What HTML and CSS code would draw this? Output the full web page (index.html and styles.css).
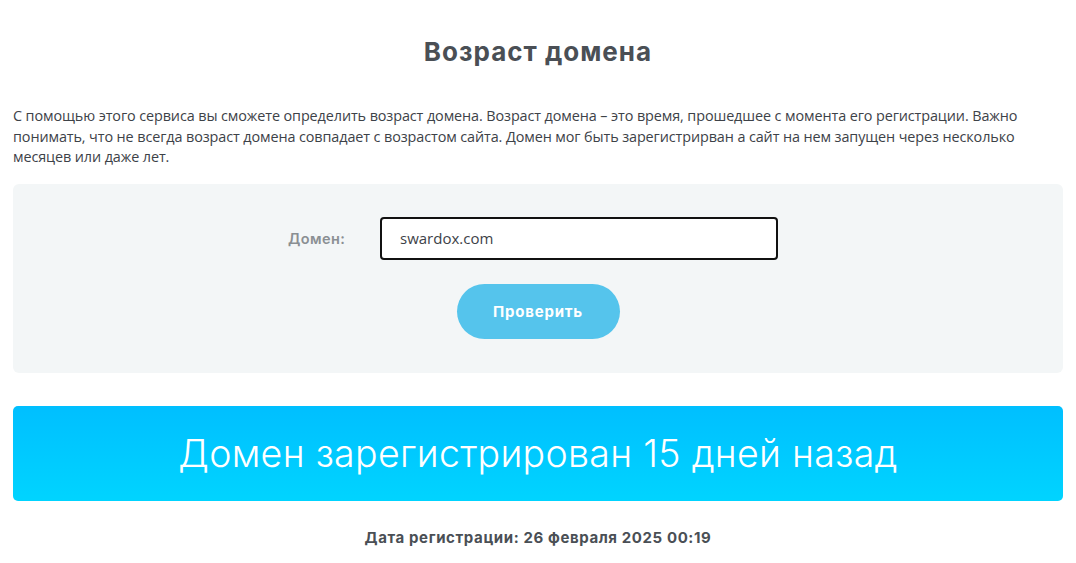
FILE: index.html
```html
<!DOCTYPE html>
<html lang="ru">
<head>
<meta charset="utf-8">
<link rel="stylesheet" href="styles.css">
</head>
<body>
<div class="page">
  <h1 class="title">Возраст домена</h1>
  <p class="intro">С помощью этого сервиса вы сможете определить возраст домена. Возраст домена – это время, прошедшее с момента его регистрации. Важно понимать, что не всегда возраст домена совпадает с возрастом сайта. Домен мог быть зарегистрирван а сайт на нем запущен через несколько месяцев или даже лет.</p>
  <form class="panel">
    <div class="row">
      <label class="label">Домен:</label>
      <div class="input">swardox.com</div>
    </div>
    <button type="button" class="btn">Проверить</button>
  </form>
  <div class="result">Домен зарегистрирован 15 дней назад</div>
  <div class="date">Дата регистрации: 26 февраля 2025 00:19</div>
</div>
</body>
</html>
```
FILE: styles.css
```css
* { box-sizing: border-box; }
html, body { margin: 0; padding: 0; background: #fff; }
body { font-family: "Open Sans", "Noto Sans", sans-serif; color: #4a4f55; }
.page { padding: 0 13px; }
.title {
  margin: 0;
  padding-top: 36px;
  height: 106px;
  text-align: center;
  font-family: "Inter", "Open Sans", sans-serif;
  font-weight: 700;
  font-size: 26px;
  letter-spacing: 1px;
  color: #4a4f55;
  line-height: 32px;
}
.intro {
  margin: 0;
  font-size: 14.4px;
  line-height: 20.5px;
  color: #3d4248;
  letter-spacing: -0.1px;
}
.panel {
  margin-top: 16px;
  height: 189px;
  background: #f3f6f7;
  border-radius: 6px;
  display: flex;
  flex-direction: column;
  align-items: center;
  padding-top: 33px;
}
.row { display: flex; align-items: center; margin-left: -10px; }
.label {
  width: 92px;
  font-family: "Inter", sans-serif;
  font-weight: 600;
  font-size: 14.5px;
  letter-spacing: 0.4px;
  color: #8a8f93;
}
.input {
  width: 398px;
  height: 43px;
  border: 2px solid #111;
  border-radius: 4px;
  background: #fff;
  padding-left: 18px;
  display: flex;
  align-items: center;
  font-size: 15px;
  color: #3d4248;
}
.btn {
  margin-top: 24px;
  width: 163px;
  height: 55px;
  border: none;
  border-radius: 28px;
  background: #55c4ec;
  color: #fff;
  font-family: "Inter", sans-serif;
  font-weight: 700;
  font-size: 15px;
  letter-spacing: 0.8px;
}
.result {
  margin-top: 33px;
  height: 95px;
  border-radius: 5px;
  background: linear-gradient(180deg, #00bfff 0%, #00d4ff 100%);
  color: #fff;
  display: flex;
  align-items: center;
  justify-content: center;
  font-family: "Inter", sans-serif;
  font-weight: 300;
  font-size: 37.5px;
  letter-spacing: 0.3px;
}
.date {
  margin-top: 27px;
  text-align: center;
  font-family: "Inter", sans-serif;
  font-weight: 700;
  font-size: 15px;
  letter-spacing: 0.6px;
  color: #4a4f55;
}
```
